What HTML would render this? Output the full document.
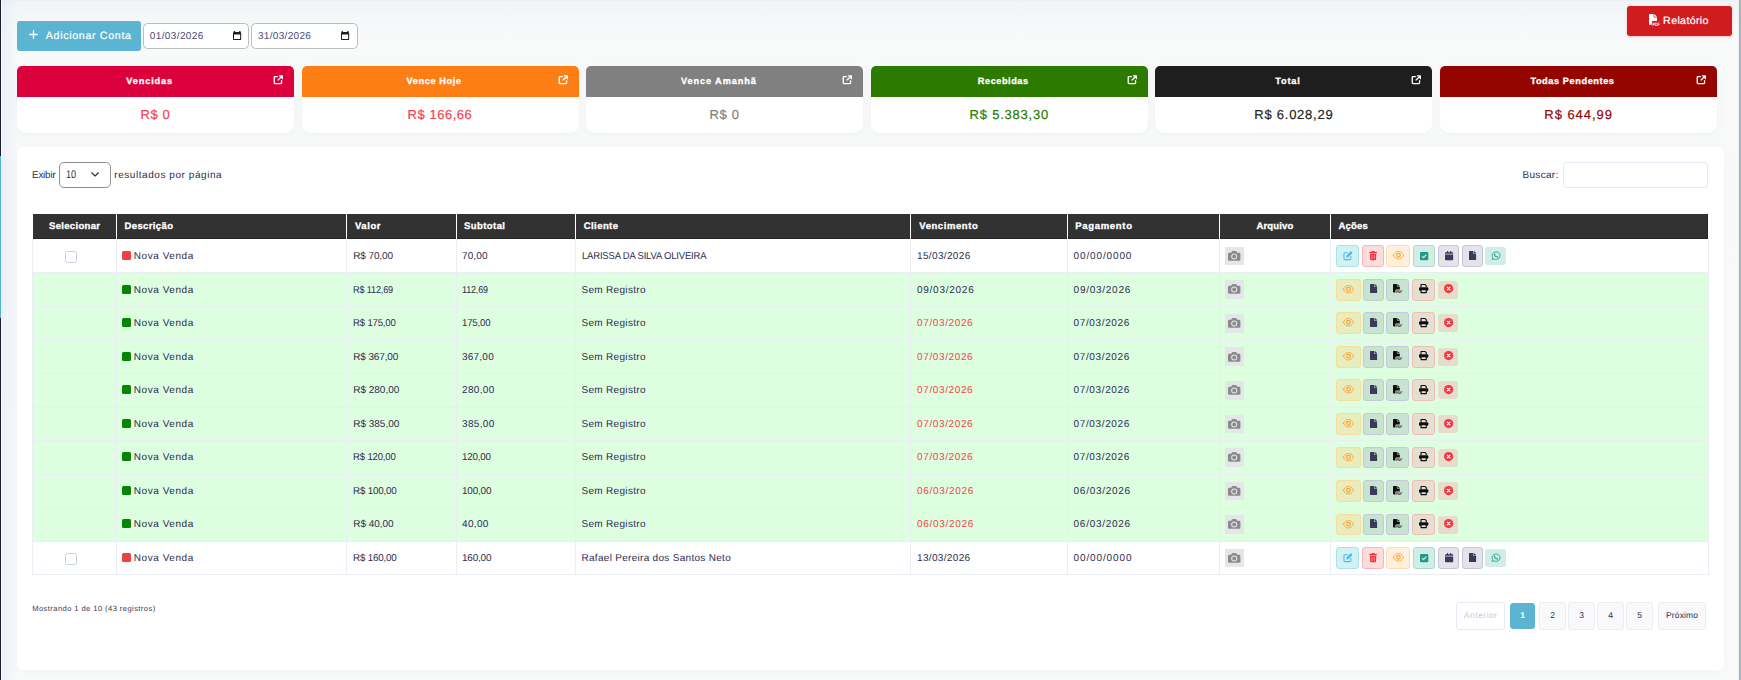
<!DOCTYPE html>
<html lang="pt-BR">
<head>
<meta charset="utf-8">
<title>Contas a Receber</title>
<style>
html,body{margin:0;padding:0;}
body{width:1741px;height:680px;position:relative;overflow:hidden;font-family:"Liberation Sans", sans-serif;text-rendering:geometricPrecision;
background:linear-gradient(180deg,#eceef3 0,#f1f4f8 2px,#f4f7f9 12px,#f8fafa 40px,#f9fbfb 100%);}
.t{position:absolute;white-space:pre;transform-origin:0 50%;}
.med{-webkit-text-stroke:0.2px currentColor;}
.bd{-webkit-text-stroke:0.3px currentColor;}
svg{display:block;overflow:visible}
</style>
</head>
<body>
<div class="app-edges">
<div style="position:absolute;left:0px;top:0px;width:1px;height:680px;background:#1b1c30;"></div>
<div style="position:absolute;left:0px;top:156px;width:1px;height:162px;background:#53b5d6;"></div>
<div style="position:absolute;left:1px;top:0px;width:1px;height:680px;background:#fbfbfe;"></div>
<div style="position:absolute;left:2px;top:0px;width:16px;height:680px;background:linear-gradient(90deg,rgba(226,234,244,.6),rgba(226,234,244,0));"></div>
<div style="position:absolute;left:1739px;top:0px;width:2px;height:680px;background:#aab2bd;"></div>
<div style="position:absolute;left:1738px;top:0px;width:1px;height:680px;background:#eceff3;"></div>
</div>
<header class="toolbar">
<div style="position:absolute;left:17px;top:21px;width:124px;height:30px;background:#5bb4d1;border-radius:3px;"></div>
<svg style="position:absolute;left:29px;top:29.6px" width="9" height="9" viewBox="0 0 18 18" preserveAspectRatio="none"><path stroke="#fff" stroke-width="2.700" d="M9 .500v17M.500 9h17"/></svg>
<span class="t med" style="left:45.80px;top:29.49px;font-size:10.7px;line-height:14px;color:#fff;letter-spacing:0.654px;">Adicionar Conta</span>
<div style="position:absolute;left:143px;top:23px;width:106px;height:26px;box-sizing:border-box;background:#fff;border:1px solid #bdbdbd;border-radius:4.5px;"></div>
<div style="position:absolute;left:251px;top:23px;width:107px;height:26px;box-sizing:border-box;background:#fff;border:1px solid #bdbdbd;border-radius:4.5px;"></div>
<span class="t " style="left:149.80px;top:30.24px;font-size:10px;line-height:13px;color:#4a4a6e;letter-spacing:0.382px;">01/03/2026</span>
<span class="t " style="left:257.90px;top:30.24px;font-size:10px;line-height:13px;color:#4a4a6e;letter-spacing:0.326px;">31/03/2026</span>
<svg style="position:absolute;left:232.9px;top:30.9px" width="8.2" height="9.1" viewBox="0 0 16 18" preserveAspectRatio="none"><path fill="#1c1c1c" fill-rule="evenodd" d="M1.600 0h1.800l.900 2.200h7.400l.900-2.200h1.800l.700 2.600A2.400 2.400 0 0 1 16 4.600V15.600a2.400 2.400 0 0 1-2.400 2.400H2.400A2.400 2.400 0 0 1 0 15.600V4.600A2.400 2.400 0 0 1 .900 2.600zM2 6.800V15.400a.600.600 0 0 0 .600.600h10.800a.600.600 0 0 0 .600-.600V6.800z"/></svg>
<svg style="position:absolute;left:341.0px;top:30.9px" width="8.2" height="9.1" viewBox="0 0 16 18" preserveAspectRatio="none"><path fill="#1c1c1c" fill-rule="evenodd" d="M1.600 0h1.800l.900 2.200h7.400l.900-2.200h1.800l.700 2.600A2.400 2.400 0 0 1 16 4.600V15.600a2.400 2.400 0 0 1-2.400 2.400H2.400A2.400 2.400 0 0 1 0 15.600V4.600A2.400 2.400 0 0 1 .900 2.600zM2 6.800V15.400a.600.600 0 0 0 .600.600h10.800a.600.600 0 0 0 .600-.600V6.800z"/></svg>
<div style="position:absolute;left:1627px;top:6.2px;width:105px;height:29.4px;background:#d01c1f;border-radius:3px;box-shadow:0 1px 3px rgba(208,28,31,.25);"></div>
<svg style="position:absolute;left:1649.2px;top:14.4px" width="10.9" height="11.7" viewBox="0 0 19 20" preserveAspectRatio="none"><path fill="#fff" d="M0 1.600A1.600 1.600 0 0 1 1.600 0H8v4.400A1.600 1.600 0 0 0 9.600 6H14v6H6.600A1.600 1.600 0 0 0 5 13.600V18.500H1.600A1.600 1.600 0 0 1 0 16.900zM14 4.800H9.600a.400.400 0 0 1-.400-.400V0z"/><text x="6" y="20" font-family="Liberation Sans, sans-serif" font-weight="700" font-size="8" textLength="13" lengthAdjust="spacingAndGlyphs" fill="#fff">PDF</text></svg>
<span class="t med" style="left:1663.10px;top:14.49px;font-size:10.7px;line-height:14px;color:#fff;letter-spacing:0.327px;">Relatório</span>
</header>
<section class="summary-cards">
<article class="card">
<div style="position:absolute;left:17.0px;top:66px;width:277.0px;height:66.6px;background:#fff;border-radius:5px 5px 9px 9px;box-shadow:0 3px 10px rgba(150,165,190,.09);overflow:hidden;"><div style="height:30.6px;background:#dc003c"></div></div>
<svg style="position:absolute;left:273.0px;top:74.6px" width="10.4" height="9.672" viewBox="0 0 20 20" preserveAspectRatio="none"><g fill="none" stroke="#fff" stroke-width="2.600" stroke-linecap="round" stroke-linejoin="round"><path d="M8.300 3.400H3.900A1.500 1.500 0 0 0 2.400 4.900V16.100A1.500 1.500 0 0 0 3.900 17.600H15A1.500 1.500 0 0 0 16.500 16.100V11.800"/><path d="M12.400 2h5.600v5.600M17.600 2.400 9.800 10.200"/></g></svg>
<span class="t bd" style="left:126.20px;top:75.01px;font-size:9.2px;line-height:12px;color:#fff;font-weight:700;letter-spacing:0.879px;">Vencidas</span>
<span class="t med" style="left:140.47px;top:106.20px;font-size:13px;line-height:17px;color:#f23e4e;letter-spacing:0.594px;">R$ 0</span>
</article>
<article class="card">
<div style="position:absolute;left:301.6px;top:66px;width:277.0px;height:66.6px;background:#fff;border-radius:5px 5px 9px 9px;box-shadow:0 3px 10px rgba(150,165,190,.09);overflow:hidden;"><div style="height:30.6px;background:#fd7e14"></div></div>
<svg style="position:absolute;left:557.6px;top:74.6px" width="10.4" height="9.672" viewBox="0 0 20 20" preserveAspectRatio="none"><g fill="none" stroke="#fff" stroke-width="2.600" stroke-linecap="round" stroke-linejoin="round"><path d="M8.300 3.400H3.900A1.500 1.500 0 0 0 2.400 4.900V16.100A1.500 1.500 0 0 0 3.900 17.600H15A1.500 1.500 0 0 0 16.500 16.100V11.800"/><path d="M12.400 2h5.600v5.600M17.600 2.400 9.800 10.200"/></g></svg>
<span class="t bd" style="left:406.55px;top:75.01px;font-size:9.2px;line-height:12px;color:#fff;font-weight:700;letter-spacing:0.608px;">Vence Hoje</span>
<span class="t med" style="left:407.58px;top:106.20px;font-size:13px;line-height:17px;color:#f23e4e;letter-spacing:0.531px;">R$ 166,66</span>
</article>
<article class="card">
<div style="position:absolute;left:586.2px;top:66px;width:277.0px;height:66.6px;background:#fff;border-radius:5px 5px 9px 9px;box-shadow:0 3px 10px rgba(150,165,190,.09);overflow:hidden;"><div style="height:30.6px;background:#808080"></div></div>
<svg style="position:absolute;left:842.2px;top:74.6px" width="10.4" height="9.672" viewBox="0 0 20 20" preserveAspectRatio="none"><g fill="none" stroke="#fff" stroke-width="2.600" stroke-linecap="round" stroke-linejoin="round"><path d="M8.300 3.400H3.900A1.500 1.500 0 0 0 2.400 4.900V16.100A1.500 1.500 0 0 0 3.900 17.600H15A1.500 1.500 0 0 0 16.500 16.100V11.800"/><path d="M12.400 2h5.600v5.600M17.600 2.400 9.800 10.200"/></g></svg>
<span class="t bd" style="left:680.90px;top:75.01px;font-size:9.2px;line-height:12px;color:#fff;font-weight:700;letter-spacing:0.906px;">Vence Amanhã</span>
<span class="t med" style="left:709.55px;top:106.20px;font-size:13px;line-height:17px;color:#808080;letter-spacing:0.677px;">R$ 0</span>
</article>
<article class="card">
<div style="position:absolute;left:870.8px;top:66px;width:277.0px;height:66.6px;background:#fff;border-radius:5px 5px 9px 9px;box-shadow:0 3px 10px rgba(150,165,190,.09);overflow:hidden;"><div style="height:30.6px;background:#2d7a00"></div></div>
<svg style="position:absolute;left:1126.8px;top:74.6px" width="10.4" height="9.672" viewBox="0 0 20 20" preserveAspectRatio="none"><g fill="none" stroke="#fff" stroke-width="2.600" stroke-linecap="round" stroke-linejoin="round"><path d="M8.300 3.400H3.900A1.500 1.500 0 0 0 2.400 4.900V16.100A1.500 1.500 0 0 0 3.900 17.600H15A1.500 1.500 0 0 0 16.500 16.100V11.800"/><path d="M12.400 2h5.600v5.600M17.600 2.400 9.800 10.200"/></g></svg>
<span class="t bd" style="left:977.85px;top:75.01px;font-size:9.2px;line-height:12px;color:#fff;font-weight:700;letter-spacing:0.541px;">Recebidas</span>
<span class="t med" style="left:969.60px;top:106.20px;font-size:13px;line-height:17px;color:#2d7a00;letter-spacing:0.776px;">R$ 5.383,30</span>
</article>
<article class="card">
<div style="position:absolute;left:1155.4px;top:66px;width:277.0px;height:66.6px;background:#fff;border-radius:5px 5px 9px 9px;box-shadow:0 3px 10px rgba(150,165,190,.09);overflow:hidden;"><div style="height:30.6px;background:#1e1e1e"></div></div>
<svg style="position:absolute;left:1411.4px;top:74.6px" width="10.4" height="9.672" viewBox="0 0 20 20" preserveAspectRatio="none"><g fill="none" stroke="#fff" stroke-width="2.600" stroke-linecap="round" stroke-linejoin="round"><path d="M8.300 3.400H3.900A1.500 1.500 0 0 0 2.400 4.900V16.100A1.500 1.500 0 0 0 3.900 17.600H15A1.500 1.500 0 0 0 16.500 16.100V11.800"/><path d="M12.400 2h5.600v5.600M17.600 2.400 9.800 10.200"/></g></svg>
<span class="t bd" style="left:1275.35px;top:75.01px;font-size:9.2px;line-height:12px;color:#fff;font-weight:700;letter-spacing:0.809px;">Total</span>
<span class="t med" style="left:1254.35px;top:106.20px;font-size:13px;line-height:17px;color:#1e1e1e;letter-spacing:0.746px;">R$ 6.028,29</span>
</article>
<article class="card">
<div style="position:absolute;left:1440.0px;top:66px;width:277.0px;height:66.6px;background:#fff;border-radius:5px 5px 9px 9px;box-shadow:0 3px 10px rgba(150,165,190,.09);overflow:hidden;"><div style="height:30.6px;background:#940500"></div></div>
<svg style="position:absolute;left:1696.0px;top:74.6px" width="10.4" height="9.672" viewBox="0 0 20 20" preserveAspectRatio="none"><g fill="none" stroke="#fff" stroke-width="2.600" stroke-linecap="round" stroke-linejoin="round"><path d="M8.300 3.400H3.900A1.500 1.500 0 0 0 2.400 4.900V16.100A1.500 1.500 0 0 0 3.900 17.600H15A1.500 1.500 0 0 0 16.500 16.100V11.800"/><path d="M12.400 2h5.600v5.600M17.600 2.400 9.800 10.200"/></g></svg>
<span class="t bd" style="left:1530.40px;top:75.01px;font-size:9.2px;line-height:12px;color:#fff;font-weight:700;letter-spacing:0.586px;">Todas Pendentes</span>
<span class="t med" style="left:1544.30px;top:106.20px;font-size:13px;line-height:17px;color:#940500;letter-spacing:0.95px;">R$ 644,99</span>
</article>
</section>
<main class="panel">
<div class="table-controls">
<div style="position:absolute;left:17px;top:147.2px;width:1707.4px;height:522.6px;background:#fff;border-radius:5px;box-shadow:0 3px 12px rgba(150,165,190,.08);"></div>
<span class="t " style="left:32.10px;top:169.23px;font-size:10px;line-height:13px;color:#2b2d4f;letter-spacing:-0.18px;transform:scaleX(0.9828);">Exibir</span>
<div style="position:absolute;left:59.3px;top:162.1px;width:51.5px;height:25.5px;box-sizing:border-box;background:#fff;border:1px solid #8f8f8f;border-radius:5px;"></div>
<span class="t " style="left:66.30px;top:167.89px;font-size:11px;line-height:15px;color:#2b2d4f;letter-spacing:-0.18px;transform:scaleX(0.8285);">10</span>
<svg style="position:absolute;left:91.1px;top:172.2px" width="8.2" height="5" viewBox="0 0 16 10" preserveAspectRatio="none"><path fill="none" stroke="#333" stroke-width="2.200" stroke-linecap="round" stroke-linejoin="round" d="M1.500 1.500 8 8l6.500-6.500"/></svg>
<span class="t " style="left:114.30px;top:169.23px;font-size:10px;line-height:13px;color:#2b2d4f;letter-spacing:0.556px;">resultados por página</span>
<span class="t " style="left:1522.50px;top:169.23px;font-size:10px;line-height:13px;color:#2b2d4f;letter-spacing:0.299px;">Buscar:</span>
<div style="position:absolute;left:1563.3px;top:162.2px;width:145.2px;height:25.4px;box-sizing:border-box;background:#fff;border:1px solid #e6e8f3;border-radius:3px;"></div>
</div>
<div class="table">
<div class="thead">
<div style="position:absolute;left:33px;top:214px;width:1675px;height:25px;background:#323232;box-sizing:border-box;border-bottom:1px solid #262626;border-right:1px solid #262626;"></div>
<div style="position:absolute;left:116px;top:214px;width:1px;height:25px;background:#fff;"></div>
<div style="position:absolute;left:346px;top:214px;width:1px;height:25px;background:#fff;"></div>
<div style="position:absolute;left:456px;top:214px;width:1px;height:25px;background:#fff;"></div>
<div style="position:absolute;left:575px;top:214px;width:1px;height:25px;background:#fff;"></div>
<div style="position:absolute;left:910px;top:214px;width:1px;height:25px;background:#fff;"></div>
<div style="position:absolute;left:1067px;top:214px;width:1px;height:25px;background:#fff;"></div>
<div style="position:absolute;left:1219px;top:214px;width:1px;height:25px;background:#fff;"></div>
<div style="position:absolute;left:1330px;top:214px;width:1px;height:25px;background:#fff;"></div>
<span class="t bd" style="left:49.00px;top:220.41px;font-size:9.5px;line-height:13px;color:#fff;font-weight:700;letter-spacing:0.326px;">Selecionar</span>
<span class="t bd" style="left:124.50px;top:220.41px;font-size:9.5px;line-height:13px;color:#fff;font-weight:700;letter-spacing:0.385px;">Descrição</span>
<span class="t bd" style="left:355.00px;top:220.41px;font-size:9.5px;line-height:13px;color:#fff;font-weight:700;letter-spacing:0.562px;">Valor</span>
<span class="t bd" style="left:464.00px;top:220.41px;font-size:9.5px;line-height:13px;color:#fff;font-weight:700;letter-spacing:0.429px;">Subtotal</span>
<span class="t bd" style="left:583.75px;top:220.41px;font-size:9.5px;line-height:13px;color:#fff;font-weight:700;letter-spacing:0.427px;">Cliente</span>
<span class="t bd" style="left:919.25px;top:220.41px;font-size:9.5px;line-height:13px;color:#fff;font-weight:700;letter-spacing:0.575px;">Vencimento</span>
<span class="t bd" style="left:1075.25px;top:220.41px;font-size:9.5px;line-height:13px;color:#fff;font-weight:700;letter-spacing:0.691px;">Pagamento</span>
<span class="t bd" style="left:1256.53px;top:220.41px;font-size:9.5px;line-height:13px;color:#fff;font-weight:700;letter-spacing:0.143px;">Arquivo</span>
<span class="t bd" style="left:1338.50px;top:220.41px;font-size:9.5px;line-height:13px;color:#fff;font-weight:700;letter-spacing:0.196px;">Ações</span>
</div>
<div class="tbody">
<div style="position:absolute;left:33px;top:273px;width:1675px;height:33px;background:#defee0;"></div>
<div style="position:absolute;left:33px;top:307px;width:1675px;height:33px;background:#defee0;"></div>
<div style="position:absolute;left:33px;top:341px;width:1675px;height:32px;background:#defee0;"></div>
<div style="position:absolute;left:33px;top:374px;width:1675px;height:33px;background:#defee0;"></div>
<div style="position:absolute;left:33px;top:408px;width:1675px;height:32px;background:#defee0;"></div>
<div style="position:absolute;left:33px;top:441px;width:1675px;height:33px;background:#defee0;"></div>
<div style="position:absolute;left:33px;top:475px;width:1675px;height:32px;background:#defee0;"></div>
<div style="position:absolute;left:33px;top:508px;width:1675px;height:33px;background:#defee0;"></div>
<div style="position:absolute;left:32px;top:272px;width:1677px;height:1px;background:#ebedf5;"></div>
<div style="position:absolute;left:32px;top:306px;width:1677px;height:1px;background:#ebedf5;"></div>
<div style="position:absolute;left:32px;top:340px;width:1677px;height:1px;background:#ebedf5;"></div>
<div style="position:absolute;left:32px;top:373px;width:1677px;height:1px;background:#ebedf5;"></div>
<div style="position:absolute;left:32px;top:407px;width:1677px;height:1px;background:#ebedf5;"></div>
<div style="position:absolute;left:32px;top:440px;width:1677px;height:1px;background:#ebedf5;"></div>
<div style="position:absolute;left:32px;top:474px;width:1677px;height:1px;background:#ebedf5;"></div>
<div style="position:absolute;left:32px;top:507px;width:1677px;height:1px;background:#ebedf5;"></div>
<div style="position:absolute;left:32px;top:541px;width:1677px;height:1px;background:#ebedf5;"></div>
<div style="position:absolute;left:32px;top:574px;width:1677px;height:1px;background:#ebedf5;"></div>
<div class="tr">
<div style="position:absolute;left:65.2px;top:251.32px;width:11.6px;height:11.5px;box-sizing:border-box;background:#fff;border:1px solid #c5cee2;border-radius:2.500px;"></div>
<div style="position:absolute;left:122px;top:250.9px;width:9px;height:8.8px;background:#f04141;border-radius:1.500px;"></div>
<span class="t " style="left:133.75px;top:250.23px;font-size:10px;line-height:13px;color:#2b2d4f;letter-spacing:0.556px;">Nova Venda</span>
<span class="t " style="left:353.25px;top:250.23px;font-size:10px;line-height:13px;color:#2b2d4f;letter-spacing:-0.121px;">R$ 70,00</span>
<span class="t " style="left:462.00px;top:250.23px;font-size:10px;line-height:13px;color:#2b2d4f;letter-spacing:0.117px;">70,00</span>
<span class="t " style="left:581.50px;top:250.23px;font-size:10px;line-height:13px;color:#2b2d4f;letter-spacing:-0.18px;transform:scaleX(0.9468);">LARISSA DA SILVA OLIVEIRA</span>
<span class="t " style="left:917.00px;top:250.23px;font-size:10px;line-height:13px;color:#2b2d4f;letter-spacing:0.354px;">15/03/2026</span>
<span class="t " style="left:1073.60px;top:250.23px;font-size:10px;line-height:13px;color:#2b2d4f;letter-spacing:0.86px;">00/00/0000</span>
<div style="position:absolute;left:1225.2px;top:246.72px;width:19px;height:18.7px;background:#e4e7e8;"></div>
<svg style="position:absolute;left:1228.4px;top:250.82px" width="12.4" height="9.7" viewBox="0 0 24 19" preserveAspectRatio="none"><path fill="#8a8a8a" d="M2.5 3.5H6L7.6.9A1.8 1.8 0 0 1 9.2 0h5.6a1.8 1.8 0 0 1 1.6.9L18 3.5h3.5A2.5 2.5 0 0 1 24 6v10.5a2.5 2.5 0 0 1-2.5 2.5h-19A2.5 2.5 0 0 1 0 16.500V6a2.500 2.500 0 0 1 2.500-2.500z"/><circle cx="12" cy="10.800" r="5.900" fill="#e4e7e8"/><circle cx="12" cy="10.800" r="3.800" fill="#8a8a8a"/></svg>
<div style="position:absolute;left:1336px;top:245px;width:23px;height:22px;box-sizing:border-box;background:#d1f1f3;border:1px solid #a9e4e8;border-radius:3px;"></div>
<svg style="position:absolute;left:1343.4px;top:250.72px" width="9.6" height="9.6" viewBox="0 0 20 20" preserveAspectRatio="none"><path fill="none" stroke="#4fb8ee" stroke-width="2.2" stroke-linecap="round" stroke-linejoin="round" d="M9 3.600H4.200A2.200 2.200 0 0 0 2 5.800v10A2.200 2.200 0 0 0 4.200 18h10a2.200 2.200 0 0 0 2.200-2.200V11"/><path fill="#4fb8ee" d="M15.200.900a1.500 1.500 0 0 1 2.100 0l1.800 1.800a1.500 1.500 0 0 1 0 2.100L11 12.900l-4.300 1 .900-4.300z"/></svg>
<div style="position:absolute;left:1362px;top:245px;width:22px;height:22px;box-sizing:border-box;background:#fddcdd;border:1px solid #f9b5b8;border-radius:3px;"></div>
<svg style="position:absolute;left:1369px;top:250.72px" width="8.2" height="9.2" viewBox="0 0 18 20" preserveAspectRatio="none"><path fill="#f0353f" d="M6.300.700A1.300 1.300 0 0 1 7.500 0h3a1.300 1.300 0 0 1 1.200.700l.500.900H16.500a1.200 1.200 0 0 1 0 2.500h-15a1.200 1.200 0 0 1 0-2.500H5.800zM1.800 5.600h14.400l-.800 12.500A2 2 0 0 1 13.400 20H4.600a2 2 0 0 1-2-1.900z"/><path stroke="#f9a9a0" stroke-width="1.700" d="M6.500 8v9.400M11.500 8v9.400"/></svg>
<div style="position:absolute;left:1386px;top:245px;width:24px;height:22px;box-sizing:border-box;background:#fff0dd;border:1px solid #ffdcb4;border-radius:3px;"></div>
<svg style="position:absolute;left:1392.9px;top:251.12px" width="10.9" height="8.5" viewBox="0 3 24 18" preserveAspectRatio="none"><g fill="none" stroke="#ffa033" stroke-linecap="round" stroke-linejoin="round"><path stroke-width="1.900" d="M1 12C3.800 6 7.800 4 12 4s8.200 2 11 8c-2.800 6-6.800 8-11 8s-8.200-2-11-8z"/><circle cx="12" cy="12" r="3.900" stroke-width="2.600"/></g></svg>
<div style="position:absolute;left:1413px;top:245px;width:22px;height:22px;box-sizing:border-box;background:#d2ece6;border:1px solid #a9dccf;border-radius:3px;"></div>
<svg style="position:absolute;left:1420px;top:251.82px" width="8.3" height="8.3" viewBox="0 0 20 20" preserveAspectRatio="none"><rect width="20" height="20" rx="3.200" fill="#1a9c86"/><path fill="none" stroke="#d6f3ee" stroke-width="2.600" stroke-linecap="round" stroke-linejoin="round" d="M5.500 10.600 8.600 13.600 14.600 7"/></svg>
<div style="position:absolute;left:1438px;top:245px;width:21px;height:22px;box-sizing:border-box;background:#e4e3ea;border:1px solid #c8c4de;border-radius:3px;"></div>
<svg style="position:absolute;left:1444.9px;top:250.72px" width="8.2" height="9.2" viewBox="0 0 18 20" preserveAspectRatio="none"><path fill="#3b3a5b" d="M0 7.500h18V18a2 2 0 0 1-2 2H2a2 2 0 0 1-2-2zM2 2.500h2.200V.800a.800.800 0 0 1 .800-.800h1.200a.800.800 0 0 1 .800.800V2.500h4V.800a.800.800 0 0 1 .800-.800H13a.800.800 0 0 1 .800.800V2.500H16a2 2 0 0 1 2 2V6H0V4.500a2 2 0 0 1 2-2z"/></svg>
<div style="position:absolute;left:1462px;top:245px;width:21px;height:22px;box-sizing:border-box;background:#e4e3ea;border:1px solid #c8c4de;border-radius:3px;"></div>
<svg style="position:absolute;left:1468.9px;top:250.72px" width="7.1" height="9.1" viewBox="0 0 15 20" preserveAspectRatio="none"><path fill="#3b3a5b" d="M8.800 5.300V0H1A1 1 0 0 0 0 1v18a1 1 0 0 0 1 1h13a1 1 0 0 0 1-1V6.300H9.800a1 1 0 0 1-1-1zM15 4.800v.200h-5V0h.200a1 1 0 0 1 .700.300l3.800 3.800a1 1 0 0 1 .300.700z"/></svg>
<div style="position:absolute;left:1485px;top:247px;width:21px;height:18px;box-sizing:border-box;background:#d2ece6;border-radius:3px;"></div>
<svg style="position:absolute;left:1491px;top:250.72px" width="10" height="9.3" viewBox="0 0 24 24" preserveAspectRatio="none"><path fill="none" stroke="#1a9c86" stroke-width="2" stroke-linejoin="round" d="M12.200 2.200a9.700 9.700 0 0 0-8.300 14.700L2.400 21.700l4.900-1.400A9.700 9.700 0 1 0 12.200 2.200z"/><path fill="#1a9c86" d="M8.600 6.800c.400-.300.900-.200 1.100.200l.900 2c.100.300.100.600-.100.800l-.700.900c.800 1.500 1.900 2.600 3.500 3.400l.900-.800c.200-.200.600-.300.900-.100l1.900 1c.400.200.500.600.300 1-.500 1.200-1.700 1.900-3 1.600-3.900-.900-6.800-3.900-7.500-7.600-.200-1 .600-1.900 1.800-2.400z"/></svg>
</div>
<div class="tr paid">
<div style="position:absolute;left:122px;top:284.9px;width:9px;height:8.8px;background:#078307;border-radius:1.500px;"></div>
<span class="t " style="left:133.75px;top:284.24px;font-size:10px;line-height:13px;color:#2b2d4f;letter-spacing:0.556px;">Nova Venda</span>
<span class="t " style="left:353.25px;top:284.24px;font-size:10px;line-height:13px;color:#2b2d4f;letter-spacing:-0.18px;transform:scaleX(0.9143);">R$ 112,69</span>
<span class="t " style="left:462.00px;top:284.24px;font-size:10px;line-height:13px;color:#2b2d4f;letter-spacing:-0.18px;transform:scaleX(0.8983);">112,69</span>
<span class="t " style="left:581.50px;top:284.24px;font-size:10px;line-height:13px;color:#2b2d4f;letter-spacing:0.311px;">Sem Registro</span>
<span class="t " style="left:917.00px;top:284.24px;font-size:10px;line-height:13px;color:#2b2d4f;letter-spacing:0.738px;">09/03/2026</span>
<span class="t " style="left:1073.60px;top:284.24px;font-size:10px;line-height:13px;color:#2b2d4f;letter-spacing:0.738px;">09/03/2026</span>
<div style="position:absolute;left:1225.2px;top:280.28px;width:19px;height:18.7px;background:#e3e7e7;"></div>
<svg style="position:absolute;left:1228.4px;top:284.38px" width="12.4" height="9.7" viewBox="0 0 24 19" preserveAspectRatio="none"><path fill="#8a8a8a" d="M2.5 3.5H6L7.6.9A1.8 1.8 0 0 1 9.2 0h5.6a1.8 1.8 0 0 1 1.6.9L18 3.5h3.5A2.5 2.5 0 0 1 24 6v10.5a2.5 2.5 0 0 1-2.5 2.5h-19A2.5 2.5 0 0 1 0 16.500V6a2.500 2.500 0 0 1 2.500-2.500z"/><circle cx="12" cy="10.800" r="5.900" fill="#e3e7e7"/><circle cx="12" cy="10.800" r="3.800" fill="#8a8a8a"/></svg>
<div style="position:absolute;left:1336px;top:279px;width:25px;height:22px;box-sizing:border-box;background:#e9edbe;border:1px solid #f5dc9f;border-radius:3px;"></div>
<svg style="position:absolute;left:1343.0px;top:284.67999999999995px" width="10.9" height="8.5" viewBox="0 3 24 18" preserveAspectRatio="none"><g fill="none" stroke="#ffa033" stroke-linecap="round" stroke-linejoin="round"><path stroke-width="1.900" d="M1 12C3.800 6 7.800 4 12 4s8.200 2 11 8c-2.800 6-6.800 8-11 8s-8.200-2-11-8z"/><circle cx="12" cy="12" r="3.900" stroke-width="2.600"/></g></svg>
<div style="position:absolute;left:1363px;top:279px;width:21px;height:22px;box-sizing:border-box;background:#c8e3cf;border:1px solid #c6c6dc;border-radius:3px;"></div>
<svg style="position:absolute;left:1370.2px;top:284.28px" width="7.1" height="9.1" viewBox="0 0 15 20" preserveAspectRatio="none"><path fill="#3b3a5b" d="M8.800 5.300V0H1A1 1 0 0 0 0 1v18a1 1 0 0 0 1 1h13a1 1 0 0 0 1-1V6.300H9.800a1 1 0 0 1-1-1zM15 4.800v.200h-5V0h.200a1 1 0 0 1 .700.300l3.800 3.800a1 1 0 0 1 .300.700z"/></svg>
<div style="position:absolute;left:1386.2px;top:279px;width:22.6px;height:22px;box-sizing:border-box;background:#c8e3cf;border:1px solid #c6c6dc;border-radius:3px;"></div>
<svg style="position:absolute;left:1393.2px;top:284.28px" width="9.2" height="9.2" viewBox="0 0 19 20" preserveAspectRatio="none"><path fill="#0d0d12" d="M0 1.600A1.600 1.600 0 0 1 1.600 0H8v4.400A1.600 1.600 0 0 0 9.600 6H14v6H6.600A1.600 1.600 0 0 0 5 13.600V18.500H1.600A1.600 1.600 0 0 1 0 16.900zM14 4.800H9.600a.400.400 0 0 1-.400-.400V0z"/><text x="6" y="20" font-family="Liberation Sans, sans-serif" font-weight="700" font-size="8" textLength="13" lengthAdjust="spacingAndGlyphs" fill="#0d0d12">PDF</text></svg>
<div style="position:absolute;left:1412.1px;top:279px;width:22.7px;height:22px;box-sizing:border-box;background:#e6dfcf;border:1px solid #f0bcb8;border-radius:3px;"></div>
<svg style="position:absolute;left:1418.9px;top:284.28px" width="9.3" height="9.2" viewBox="0 0 20 20" preserveAspectRatio="none"><path fill="none" stroke="#0d0d12" stroke-width="2.400" stroke-linejoin="round" d="M4.400 7V1.200h8.800l2.400 2.400V7"/><rect x="0" y="7" width="20" height="7.600" rx="2.200" fill="#0d0d12"/><rect x="4.400" y="12.200" width="11.200" height="6.600" fill="#e6dfcf" stroke="#0d0d12" stroke-width="2.400" stroke-linejoin="round"/></svg>
<div style="position:absolute;left:1438.2px;top:280.5px;width:19.7px;height:18.5px;box-sizing:border-box;background:#e5dccb;border-radius:3px;"></div>
<svg style="position:absolute;left:1443.7px;top:284.28px" width="9.2" height="9.2" viewBox="0 0 20 20" preserveAspectRatio="none"><circle cx="10" cy="10" r="10" fill="#f03a44"/><path stroke="#fff" stroke-width="2.300" stroke-linecap="round" d="M7 7l6 6M13 7l-6 6"/></svg>
</div>
<div class="tr paid">
<div style="position:absolute;left:122px;top:317.9px;width:9px;height:8.8px;background:#078307;border-radius:1.500px;"></div>
<span class="t " style="left:133.75px;top:317.24px;font-size:10px;line-height:13px;color:#2b2d4f;letter-spacing:0.556px;">Nova Venda</span>
<span class="t " style="left:353.25px;top:317.24px;font-size:10px;line-height:13px;color:#2b2d4f;letter-spacing:-0.18px;transform:scaleX(0.9571);">R$ 175,00</span>
<span class="t " style="left:462.00px;top:317.24px;font-size:10px;line-height:13px;color:#2b2d4f;letter-spacing:-0.18px;transform:scaleX(0.9632);">175,00</span>
<span class="t " style="left:581.50px;top:317.24px;font-size:10px;line-height:13px;color:#2b2d4f;letter-spacing:0.311px;">Sem Registro</span>
<span class="t " style="left:917.00px;top:317.24px;font-size:10px;line-height:13px;color:#f04545;letter-spacing:0.626px;">07/03/2026</span>
<span class="t " style="left:1073.60px;top:317.24px;font-size:10px;line-height:13px;color:#2b2d4f;letter-spacing:0.626px;">07/03/2026</span>
<div style="position:absolute;left:1225.2px;top:313.85px;width:19px;height:18.7px;background:#e3e7e7;"></div>
<svg style="position:absolute;left:1228.4px;top:317.95px" width="12.4" height="9.7" viewBox="0 0 24 19" preserveAspectRatio="none"><path fill="#8a8a8a" d="M2.5 3.5H6L7.6.9A1.8 1.8 0 0 1 9.2 0h5.6a1.8 1.8 0 0 1 1.6.9L18 3.5h3.5A2.5 2.5 0 0 1 24 6v10.5a2.5 2.5 0 0 1-2.5 2.5h-19A2.5 2.5 0 0 1 0 16.500V6a2.500 2.500 0 0 1 2.500-2.500z"/><circle cx="12" cy="10.800" r="5.900" fill="#e3e7e7"/><circle cx="12" cy="10.800" r="3.800" fill="#8a8a8a"/></svg>
<div style="position:absolute;left:1336px;top:312px;width:25px;height:22px;box-sizing:border-box;background:#e9edbe;border:1px solid #f5dc9f;border-radius:3px;"></div>
<svg style="position:absolute;left:1343.0px;top:318.25px" width="10.9" height="8.5" viewBox="0 3 24 18" preserveAspectRatio="none"><g fill="none" stroke="#ffa033" stroke-linecap="round" stroke-linejoin="round"><path stroke-width="1.900" d="M1 12C3.800 6 7.800 4 12 4s8.200 2 11 8c-2.800 6-6.800 8-11 8s-8.200-2-11-8z"/><circle cx="12" cy="12" r="3.900" stroke-width="2.600"/></g></svg>
<div style="position:absolute;left:1363px;top:312px;width:21px;height:22px;box-sizing:border-box;background:#c8e3cf;border:1px solid #c6c6dc;border-radius:3px;"></div>
<svg style="position:absolute;left:1370.2px;top:317.85px" width="7.1" height="9.1" viewBox="0 0 15 20" preserveAspectRatio="none"><path fill="#3b3a5b" d="M8.800 5.300V0H1A1 1 0 0 0 0 1v18a1 1 0 0 0 1 1h13a1 1 0 0 0 1-1V6.300H9.800a1 1 0 0 1-1-1zM15 4.800v.200h-5V0h.200a1 1 0 0 1 .700.300l3.800 3.800a1 1 0 0 1 .300.700z"/></svg>
<div style="position:absolute;left:1386.2px;top:312px;width:22.6px;height:22px;box-sizing:border-box;background:#c8e3cf;border:1px solid #c6c6dc;border-radius:3px;"></div>
<svg style="position:absolute;left:1393.2px;top:317.85px" width="9.2" height="9.2" viewBox="0 0 19 20" preserveAspectRatio="none"><path fill="#0d0d12" d="M0 1.600A1.600 1.600 0 0 1 1.600 0H8v4.400A1.600 1.600 0 0 0 9.600 6H14v6H6.600A1.600 1.600 0 0 0 5 13.600V18.500H1.600A1.600 1.600 0 0 1 0 16.900zM14 4.800H9.600a.400.400 0 0 1-.400-.400V0z"/><text x="6" y="20" font-family="Liberation Sans, sans-serif" font-weight="700" font-size="8" textLength="13" lengthAdjust="spacingAndGlyphs" fill="#0d0d12">PDF</text></svg>
<div style="position:absolute;left:1412.1px;top:312px;width:22.7px;height:22px;box-sizing:border-box;background:#e6dfcf;border:1px solid #f0bcb8;border-radius:3px;"></div>
<svg style="position:absolute;left:1418.9px;top:317.85px" width="9.3" height="9.2" viewBox="0 0 20 20" preserveAspectRatio="none"><path fill="none" stroke="#0d0d12" stroke-width="2.400" stroke-linejoin="round" d="M4.400 7V1.200h8.800l2.400 2.400V7"/><rect x="0" y="7" width="20" height="7.600" rx="2.200" fill="#0d0d12"/><rect x="4.400" y="12.200" width="11.200" height="6.600" fill="#e6dfcf" stroke="#0d0d12" stroke-width="2.400" stroke-linejoin="round"/></svg>
<div style="position:absolute;left:1438.2px;top:313.5px;width:19.7px;height:18.5px;box-sizing:border-box;background:#e5dccb;border-radius:3px;"></div>
<svg style="position:absolute;left:1443.7px;top:317.85px" width="9.2" height="9.2" viewBox="0 0 20 20" preserveAspectRatio="none"><circle cx="10" cy="10" r="10" fill="#f03a44"/><path stroke="#fff" stroke-width="2.300" stroke-linecap="round" d="M7 7l6 6M13 7l-6 6"/></svg>
</div>
<div class="tr paid">
<div style="position:absolute;left:122px;top:351.9px;width:9px;height:8.8px;background:#078307;border-radius:1.500px;"></div>
<span class="t " style="left:133.75px;top:351.24px;font-size:10px;line-height:13px;color:#2b2d4f;letter-spacing:0.556px;">Nova Venda</span>
<span class="t " style="left:353.25px;top:351.24px;font-size:10px;line-height:13px;color:#2b2d4f;letter-spacing:-0.145px;">R$ 367,00</span>
<span class="t " style="left:462.00px;top:351.24px;font-size:10px;line-height:13px;color:#2b2d4f;letter-spacing:0.221px;">367,00</span>
<span class="t " style="left:581.50px;top:351.24px;font-size:10px;line-height:13px;color:#2b2d4f;letter-spacing:0.311px;">Sem Registro</span>
<span class="t " style="left:917.00px;top:351.24px;font-size:10px;line-height:13px;color:#f04545;letter-spacing:0.626px;">07/03/2026</span>
<span class="t " style="left:1073.60px;top:351.24px;font-size:10px;line-height:13px;color:#2b2d4f;letter-spacing:0.626px;">07/03/2026</span>
<div style="position:absolute;left:1225.2px;top:347.41px;width:19px;height:18.7px;background:#e3e7e7;"></div>
<svg style="position:absolute;left:1228.4px;top:351.51px" width="12.4" height="9.7" viewBox="0 0 24 19" preserveAspectRatio="none"><path fill="#8a8a8a" d="M2.5 3.5H6L7.6.9A1.8 1.8 0 0 1 9.2 0h5.6a1.8 1.8 0 0 1 1.6.9L18 3.5h3.5A2.5 2.5 0 0 1 24 6v10.5a2.5 2.5 0 0 1-2.5 2.5h-19A2.5 2.5 0 0 1 0 16.500V6a2.500 2.500 0 0 1 2.500-2.500z"/><circle cx="12" cy="10.800" r="5.900" fill="#e3e7e7"/><circle cx="12" cy="10.800" r="3.800" fill="#8a8a8a"/></svg>
<div style="position:absolute;left:1336px;top:346px;width:25px;height:22px;box-sizing:border-box;background:#e9edbe;border:1px solid #f5dc9f;border-radius:3px;"></div>
<svg style="position:absolute;left:1343.0px;top:351.81px" width="10.9" height="8.5" viewBox="0 3 24 18" preserveAspectRatio="none"><g fill="none" stroke="#ffa033" stroke-linecap="round" stroke-linejoin="round"><path stroke-width="1.900" d="M1 12C3.800 6 7.800 4 12 4s8.200 2 11 8c-2.800 6-6.800 8-11 8s-8.200-2-11-8z"/><circle cx="12" cy="12" r="3.900" stroke-width="2.600"/></g></svg>
<div style="position:absolute;left:1363px;top:346px;width:21px;height:22px;box-sizing:border-box;background:#c8e3cf;border:1px solid #c6c6dc;border-radius:3px;"></div>
<svg style="position:absolute;left:1370.2px;top:351.41px" width="7.1" height="9.1" viewBox="0 0 15 20" preserveAspectRatio="none"><path fill="#3b3a5b" d="M8.800 5.300V0H1A1 1 0 0 0 0 1v18a1 1 0 0 0 1 1h13a1 1 0 0 0 1-1V6.300H9.800a1 1 0 0 1-1-1zM15 4.800v.200h-5V0h.200a1 1 0 0 1 .700.300l3.800 3.800a1 1 0 0 1 .300.700z"/></svg>
<div style="position:absolute;left:1386.2px;top:346px;width:22.6px;height:22px;box-sizing:border-box;background:#c8e3cf;border:1px solid #c6c6dc;border-radius:3px;"></div>
<svg style="position:absolute;left:1393.2px;top:351.41px" width="9.2" height="9.2" viewBox="0 0 19 20" preserveAspectRatio="none"><path fill="#0d0d12" d="M0 1.600A1.600 1.600 0 0 1 1.600 0H8v4.400A1.600 1.600 0 0 0 9.600 6H14v6H6.600A1.600 1.600 0 0 0 5 13.600V18.500H1.600A1.600 1.600 0 0 1 0 16.900zM14 4.800H9.600a.400.400 0 0 1-.400-.400V0z"/><text x="6" y="20" font-family="Liberation Sans, sans-serif" font-weight="700" font-size="8" textLength="13" lengthAdjust="spacingAndGlyphs" fill="#0d0d12">PDF</text></svg>
<div style="position:absolute;left:1412.1px;top:346px;width:22.7px;height:22px;box-sizing:border-box;background:#e6dfcf;border:1px solid #f0bcb8;border-radius:3px;"></div>
<svg style="position:absolute;left:1418.9px;top:351.41px" width="9.3" height="9.2" viewBox="0 0 20 20" preserveAspectRatio="none"><path fill="none" stroke="#0d0d12" stroke-width="2.400" stroke-linejoin="round" d="M4.400 7V1.200h8.800l2.400 2.400V7"/><rect x="0" y="7" width="20" height="7.600" rx="2.200" fill="#0d0d12"/><rect x="4.400" y="12.200" width="11.200" height="6.600" fill="#e6dfcf" stroke="#0d0d12" stroke-width="2.400" stroke-linejoin="round"/></svg>
<div style="position:absolute;left:1438.2px;top:347.5px;width:19.7px;height:18.5px;box-sizing:border-box;background:#e5dccb;border-radius:3px;"></div>
<svg style="position:absolute;left:1443.7px;top:351.41px" width="9.2" height="9.2" viewBox="0 0 20 20" preserveAspectRatio="none"><circle cx="10" cy="10" r="10" fill="#f03a44"/><path stroke="#fff" stroke-width="2.300" stroke-linecap="round" d="M7 7l6 6M13 7l-6 6"/></svg>
</div>
<div class="tr paid">
<div style="position:absolute;left:122px;top:384.9px;width:9px;height:8.8px;background:#078307;border-radius:1.500px;"></div>
<span class="t " style="left:133.75px;top:384.24px;font-size:10px;line-height:13px;color:#2b2d4f;letter-spacing:0.556px;">Nova Venda</span>
<span class="t " style="left:353.25px;top:384.24px;font-size:10px;line-height:13px;color:#2b2d4f;letter-spacing:-0.02px;">R$ 280,00</span>
<span class="t " style="left:462.00px;top:384.24px;font-size:10px;line-height:13px;color:#2b2d4f;letter-spacing:0.321px;">280,00</span>
<span class="t " style="left:581.50px;top:384.24px;font-size:10px;line-height:13px;color:#2b2d4f;letter-spacing:0.311px;">Sem Registro</span>
<span class="t " style="left:917.00px;top:384.24px;font-size:10px;line-height:13px;color:#f04545;letter-spacing:0.626px;">07/03/2026</span>
<span class="t " style="left:1073.60px;top:384.24px;font-size:10px;line-height:13px;color:#2b2d4f;letter-spacing:0.626px;">07/03/2026</span>
<div style="position:absolute;left:1225.2px;top:380.97px;width:19px;height:18.7px;background:#e3e7e7;"></div>
<svg style="position:absolute;left:1228.4px;top:385.07px" width="12.4" height="9.7" viewBox="0 0 24 19" preserveAspectRatio="none"><path fill="#8a8a8a" d="M2.5 3.5H6L7.6.9A1.8 1.8 0 0 1 9.2 0h5.6a1.8 1.8 0 0 1 1.6.9L18 3.5h3.5A2.5 2.5 0 0 1 24 6v10.5a2.5 2.5 0 0 1-2.5 2.5h-19A2.5 2.5 0 0 1 0 16.500V6a2.500 2.500 0 0 1 2.500-2.500z"/><circle cx="12" cy="10.800" r="5.900" fill="#e3e7e7"/><circle cx="12" cy="10.800" r="3.800" fill="#8a8a8a"/></svg>
<div style="position:absolute;left:1336px;top:379px;width:25px;height:22px;box-sizing:border-box;background:#e9edbe;border:1px solid #f5dc9f;border-radius:3px;"></div>
<svg style="position:absolute;left:1343.0px;top:385.37px" width="10.9" height="8.5" viewBox="0 3 24 18" preserveAspectRatio="none"><g fill="none" stroke="#ffa033" stroke-linecap="round" stroke-linejoin="round"><path stroke-width="1.900" d="M1 12C3.800 6 7.800 4 12 4s8.200 2 11 8c-2.800 6-6.800 8-11 8s-8.200-2-11-8z"/><circle cx="12" cy="12" r="3.900" stroke-width="2.600"/></g></svg>
<div style="position:absolute;left:1363px;top:379px;width:21px;height:22px;box-sizing:border-box;background:#c8e3cf;border:1px solid #c6c6dc;border-radius:3px;"></div>
<svg style="position:absolute;left:1370.2px;top:384.97px" width="7.1" height="9.1" viewBox="0 0 15 20" preserveAspectRatio="none"><path fill="#3b3a5b" d="M8.800 5.300V0H1A1 1 0 0 0 0 1v18a1 1 0 0 0 1 1h13a1 1 0 0 0 1-1V6.300H9.800a1 1 0 0 1-1-1zM15 4.800v.200h-5V0h.200a1 1 0 0 1 .700.300l3.800 3.800a1 1 0 0 1 .300.700z"/></svg>
<div style="position:absolute;left:1386.2px;top:379px;width:22.6px;height:22px;box-sizing:border-box;background:#c8e3cf;border:1px solid #c6c6dc;border-radius:3px;"></div>
<svg style="position:absolute;left:1393.2px;top:384.97px" width="9.2" height="9.2" viewBox="0 0 19 20" preserveAspectRatio="none"><path fill="#0d0d12" d="M0 1.600A1.600 1.600 0 0 1 1.600 0H8v4.400A1.600 1.600 0 0 0 9.600 6H14v6H6.600A1.600 1.600 0 0 0 5 13.600V18.500H1.600A1.600 1.600 0 0 1 0 16.900zM14 4.800H9.600a.400.400 0 0 1-.400-.400V0z"/><text x="6" y="20" font-family="Liberation Sans, sans-serif" font-weight="700" font-size="8" textLength="13" lengthAdjust="spacingAndGlyphs" fill="#0d0d12">PDF</text></svg>
<div style="position:absolute;left:1412.1px;top:379px;width:22.7px;height:22px;box-sizing:border-box;background:#e6dfcf;border:1px solid #f0bcb8;border-radius:3px;"></div>
<svg style="position:absolute;left:1418.9px;top:384.97px" width="9.3" height="9.2" viewBox="0 0 20 20" preserveAspectRatio="none"><path fill="none" stroke="#0d0d12" stroke-width="2.400" stroke-linejoin="round" d="M4.400 7V1.200h8.800l2.400 2.400V7"/><rect x="0" y="7" width="20" height="7.600" rx="2.200" fill="#0d0d12"/><rect x="4.400" y="12.200" width="11.200" height="6.600" fill="#e6dfcf" stroke="#0d0d12" stroke-width="2.400" stroke-linejoin="round"/></svg>
<div style="position:absolute;left:1438.2px;top:380.5px;width:19.7px;height:18.5px;box-sizing:border-box;background:#e5dccb;border-radius:3px;"></div>
<svg style="position:absolute;left:1443.7px;top:384.97px" width="9.2" height="9.2" viewBox="0 0 20 20" preserveAspectRatio="none"><circle cx="10" cy="10" r="10" fill="#f03a44"/><path stroke="#fff" stroke-width="2.300" stroke-linecap="round" d="M7 7l6 6M13 7l-6 6"/></svg>
</div>
<div class="tr paid">
<div style="position:absolute;left:122px;top:418.9px;width:9px;height:8.8px;background:#078307;border-radius:1.500px;"></div>
<span class="t " style="left:133.75px;top:418.24px;font-size:10px;line-height:13px;color:#2b2d4f;letter-spacing:0.556px;">Nova Venda</span>
<span class="t " style="left:353.25px;top:418.24px;font-size:10px;line-height:13px;color:#2b2d4f;letter-spacing:-0.02px;">R$ 385,00</span>
<span class="t " style="left:462.00px;top:418.24px;font-size:10px;line-height:13px;color:#2b2d4f;letter-spacing:0.321px;">385,00</span>
<span class="t " style="left:581.50px;top:418.24px;font-size:10px;line-height:13px;color:#2b2d4f;letter-spacing:0.311px;">Sem Registro</span>
<span class="t " style="left:917.00px;top:418.24px;font-size:10px;line-height:13px;color:#f04545;letter-spacing:0.626px;">07/03/2026</span>
<span class="t " style="left:1073.60px;top:418.24px;font-size:10px;line-height:13px;color:#2b2d4f;letter-spacing:0.626px;">07/03/2026</span>
<div style="position:absolute;left:1225.2px;top:414.53px;width:19px;height:18.7px;background:#e3e7e7;"></div>
<svg style="position:absolute;left:1228.4px;top:418.63px" width="12.4" height="9.7" viewBox="0 0 24 19" preserveAspectRatio="none"><path fill="#8a8a8a" d="M2.5 3.5H6L7.6.9A1.8 1.8 0 0 1 9.2 0h5.6a1.8 1.8 0 0 1 1.6.9L18 3.5h3.5A2.5 2.5 0 0 1 24 6v10.5a2.5 2.5 0 0 1-2.5 2.5h-19A2.5 2.5 0 0 1 0 16.500V6a2.500 2.500 0 0 1 2.500-2.500z"/><circle cx="12" cy="10.800" r="5.900" fill="#e3e7e7"/><circle cx="12" cy="10.800" r="3.800" fill="#8a8a8a"/></svg>
<div style="position:absolute;left:1336px;top:413px;width:25px;height:22px;box-sizing:border-box;background:#e9edbe;border:1px solid #f5dc9f;border-radius:3px;"></div>
<svg style="position:absolute;left:1343.0px;top:418.92999999999995px" width="10.9" height="8.5" viewBox="0 3 24 18" preserveAspectRatio="none"><g fill="none" stroke="#ffa033" stroke-linecap="round" stroke-linejoin="round"><path stroke-width="1.900" d="M1 12C3.800 6 7.800 4 12 4s8.200 2 11 8c-2.800 6-6.800 8-11 8s-8.200-2-11-8z"/><circle cx="12" cy="12" r="3.900" stroke-width="2.600"/></g></svg>
<div style="position:absolute;left:1363px;top:413px;width:21px;height:22px;box-sizing:border-box;background:#c8e3cf;border:1px solid #c6c6dc;border-radius:3px;"></div>
<svg style="position:absolute;left:1370.2px;top:418.53px" width="7.1" height="9.1" viewBox="0 0 15 20" preserveAspectRatio="none"><path fill="#3b3a5b" d="M8.800 5.300V0H1A1 1 0 0 0 0 1v18a1 1 0 0 0 1 1h13a1 1 0 0 0 1-1V6.300H9.800a1 1 0 0 1-1-1zM15 4.800v.200h-5V0h.200a1 1 0 0 1 .700.300l3.800 3.800a1 1 0 0 1 .300.700z"/></svg>
<div style="position:absolute;left:1386.2px;top:413px;width:22.6px;height:22px;box-sizing:border-box;background:#c8e3cf;border:1px solid #c6c6dc;border-radius:3px;"></div>
<svg style="position:absolute;left:1393.2px;top:418.53px" width="9.2" height="9.2" viewBox="0 0 19 20" preserveAspectRatio="none"><path fill="#0d0d12" d="M0 1.600A1.600 1.600 0 0 1 1.600 0H8v4.400A1.600 1.600 0 0 0 9.600 6H14v6H6.600A1.600 1.600 0 0 0 5 13.600V18.500H1.600A1.600 1.600 0 0 1 0 16.900zM14 4.800H9.600a.400.400 0 0 1-.400-.400V0z"/><text x="6" y="20" font-family="Liberation Sans, sans-serif" font-weight="700" font-size="8" textLength="13" lengthAdjust="spacingAndGlyphs" fill="#0d0d12">PDF</text></svg>
<div style="position:absolute;left:1412.1px;top:413px;width:22.7px;height:22px;box-sizing:border-box;background:#e6dfcf;border:1px solid #f0bcb8;border-radius:3px;"></div>
<svg style="position:absolute;left:1418.9px;top:418.53px" width="9.3" height="9.2" viewBox="0 0 20 20" preserveAspectRatio="none"><path fill="none" stroke="#0d0d12" stroke-width="2.400" stroke-linejoin="round" d="M4.400 7V1.200h8.800l2.400 2.400V7"/><rect x="0" y="7" width="20" height="7.600" rx="2.200" fill="#0d0d12"/><rect x="4.400" y="12.200" width="11.200" height="6.600" fill="#e6dfcf" stroke="#0d0d12" stroke-width="2.400" stroke-linejoin="round"/></svg>
<div style="position:absolute;left:1438.2px;top:414.5px;width:19.7px;height:18.5px;box-sizing:border-box;background:#e5dccb;border-radius:3px;"></div>
<svg style="position:absolute;left:1443.7px;top:418.53px" width="9.2" height="9.2" viewBox="0 0 20 20" preserveAspectRatio="none"><circle cx="10" cy="10" r="10" fill="#f03a44"/><path stroke="#fff" stroke-width="2.300" stroke-linecap="round" d="M7 7l6 6M13 7l-6 6"/></svg>
</div>
<div class="tr paid">
<div style="position:absolute;left:122px;top:451.9px;width:9px;height:8.8px;background:#078307;border-radius:1.500px;"></div>
<span class="t " style="left:133.75px;top:451.24px;font-size:10px;line-height:13px;color:#2b2d4f;letter-spacing:0.556px;">Nova Venda</span>
<span class="t " style="left:353.25px;top:451.24px;font-size:10px;line-height:13px;color:#2b2d4f;letter-spacing:-0.18px;transform:scaleX(0.9571);">R$ 120,00</span>
<span class="t " style="left:462.00px;top:451.24px;font-size:10px;line-height:13px;color:#2b2d4f;letter-spacing:-0.18px;transform:scaleX(0.9766);">120,00</span>
<span class="t " style="left:581.50px;top:451.24px;font-size:10px;line-height:13px;color:#2b2d4f;letter-spacing:0.311px;">Sem Registro</span>
<span class="t " style="left:917.00px;top:451.24px;font-size:10px;line-height:13px;color:#f04545;letter-spacing:0.626px;">07/03/2026</span>
<span class="t " style="left:1073.60px;top:451.24px;font-size:10px;line-height:13px;color:#2b2d4f;letter-spacing:0.626px;">07/03/2026</span>
<div style="position:absolute;left:1225.2px;top:448.1px;width:19px;height:18.7px;background:#e3e7e7;"></div>
<svg style="position:absolute;left:1228.4px;top:452.2px" width="12.4" height="9.7" viewBox="0 0 24 19" preserveAspectRatio="none"><path fill="#8a8a8a" d="M2.5 3.5H6L7.6.9A1.8 1.8 0 0 1 9.2 0h5.6a1.8 1.8 0 0 1 1.6.9L18 3.5h3.5A2.5 2.5 0 0 1 24 6v10.5a2.5 2.5 0 0 1-2.5 2.5h-19A2.5 2.5 0 0 1 0 16.500V6a2.500 2.500 0 0 1 2.500-2.500z"/><circle cx="12" cy="10.800" r="5.900" fill="#e3e7e7"/><circle cx="12" cy="10.800" r="3.800" fill="#8a8a8a"/></svg>
<div style="position:absolute;left:1336px;top:447px;width:25px;height:21px;box-sizing:border-box;background:#e9edbe;border:1px solid #f5dc9f;border-radius:3px;"></div>
<svg style="position:absolute;left:1343.0px;top:452.5px" width="10.9" height="8.5" viewBox="0 3 24 18" preserveAspectRatio="none"><g fill="none" stroke="#ffa033" stroke-linecap="round" stroke-linejoin="round"><path stroke-width="1.900" d="M1 12C3.800 6 7.800 4 12 4s8.200 2 11 8c-2.800 6-6.800 8-11 8s-8.200-2-11-8z"/><circle cx="12" cy="12" r="3.900" stroke-width="2.600"/></g></svg>
<div style="position:absolute;left:1363px;top:447px;width:21px;height:21px;box-sizing:border-box;background:#c8e3cf;border:1px solid #c6c6dc;border-radius:3px;"></div>
<svg style="position:absolute;left:1370.2px;top:452.1px" width="7.1" height="9.1" viewBox="0 0 15 20" preserveAspectRatio="none"><path fill="#3b3a5b" d="M8.800 5.300V0H1A1 1 0 0 0 0 1v18a1 1 0 0 0 1 1h13a1 1 0 0 0 1-1V6.300H9.800a1 1 0 0 1-1-1zM15 4.800v.200h-5V0h.200a1 1 0 0 1 .700.300l3.800 3.800a1 1 0 0 1 .300.700z"/></svg>
<div style="position:absolute;left:1386.2px;top:447px;width:22.6px;height:21px;box-sizing:border-box;background:#c8e3cf;border:1px solid #c6c6dc;border-radius:3px;"></div>
<svg style="position:absolute;left:1393.2px;top:452.1px" width="9.2" height="9.2" viewBox="0 0 19 20" preserveAspectRatio="none"><path fill="#0d0d12" d="M0 1.600A1.600 1.600 0 0 1 1.600 0H8v4.400A1.600 1.600 0 0 0 9.600 6H14v6H6.600A1.600 1.600 0 0 0 5 13.600V18.500H1.600A1.600 1.600 0 0 1 0 16.900zM14 4.800H9.600a.400.400 0 0 1-.400-.400V0z"/><text x="6" y="20" font-family="Liberation Sans, sans-serif" font-weight="700" font-size="8" textLength="13" lengthAdjust="spacingAndGlyphs" fill="#0d0d12">PDF</text></svg>
<div style="position:absolute;left:1412.1px;top:447px;width:22.7px;height:21px;box-sizing:border-box;background:#e6dfcf;border:1px solid #f0bcb8;border-radius:3px;"></div>
<svg style="position:absolute;left:1418.9px;top:452.1px" width="9.3" height="9.2" viewBox="0 0 20 20" preserveAspectRatio="none"><path fill="none" stroke="#0d0d12" stroke-width="2.400" stroke-linejoin="round" d="M4.400 7V1.200h8.800l2.400 2.400V7"/><rect x="0" y="7" width="20" height="7.600" rx="2.200" fill="#0d0d12"/><rect x="4.400" y="12.200" width="11.200" height="6.600" fill="#e6dfcf" stroke="#0d0d12" stroke-width="2.400" stroke-linejoin="round"/></svg>
<div style="position:absolute;left:1438.2px;top:448.5px;width:19.7px;height:18.5px;box-sizing:border-box;background:#e5dccb;border-radius:3px;"></div>
<svg style="position:absolute;left:1443.7px;top:452.1px" width="9.2" height="9.2" viewBox="0 0 20 20" preserveAspectRatio="none"><circle cx="10" cy="10" r="10" fill="#f03a44"/><path stroke="#fff" stroke-width="2.300" stroke-linecap="round" d="M7 7l6 6M13 7l-6 6"/></svg>
</div>
<div class="tr paid">
<div style="position:absolute;left:122px;top:485.9px;width:9px;height:8.8px;background:#078307;border-radius:1.500px;"></div>
<span class="t " style="left:133.75px;top:485.24px;font-size:10px;line-height:13px;color:#2b2d4f;letter-spacing:0.556px;">Nova Venda</span>
<span class="t " style="left:353.25px;top:485.24px;font-size:10px;line-height:13px;color:#2b2d4f;letter-spacing:-0.18px;transform:scaleX(0.9773);">R$ 100,00</span>
<span class="t " style="left:462.00px;top:485.24px;font-size:10px;line-height:13px;color:#2b2d4f;letter-spacing:-0.18px;transform:scaleX(0.9935);">100,00</span>
<span class="t " style="left:581.50px;top:485.24px;font-size:10px;line-height:13px;color:#2b2d4f;letter-spacing:0.311px;">Sem Registro</span>
<span class="t " style="left:917.00px;top:485.24px;font-size:10px;line-height:13px;color:#f04545;letter-spacing:0.682px;">06/03/2026</span>
<span class="t " style="left:1073.60px;top:485.24px;font-size:10px;line-height:13px;color:#2b2d4f;letter-spacing:0.715px;">06/03/2026</span>
<div style="position:absolute;left:1225.2px;top:481.66px;width:19px;height:18.7px;background:#e3e7e7;"></div>
<svg style="position:absolute;left:1228.4px;top:485.76px" width="12.4" height="9.7" viewBox="0 0 24 19" preserveAspectRatio="none"><path fill="#8a8a8a" d="M2.5 3.5H6L7.6.9A1.8 1.8 0 0 1 9.2 0h5.6a1.8 1.8 0 0 1 1.6.9L18 3.5h3.5A2.5 2.5 0 0 1 24 6v10.5a2.5 2.5 0 0 1-2.5 2.5h-19A2.5 2.5 0 0 1 0 16.500V6a2.500 2.500 0 0 1 2.500-2.500z"/><circle cx="12" cy="10.800" r="5.900" fill="#e3e7e7"/><circle cx="12" cy="10.800" r="3.800" fill="#8a8a8a"/></svg>
<div style="position:absolute;left:1336px;top:480px;width:25px;height:22px;box-sizing:border-box;background:#e9edbe;border:1px solid #f5dc9f;border-radius:3px;"></div>
<svg style="position:absolute;left:1343.0px;top:486.06px" width="10.9" height="8.5" viewBox="0 3 24 18" preserveAspectRatio="none"><g fill="none" stroke="#ffa033" stroke-linecap="round" stroke-linejoin="round"><path stroke-width="1.900" d="M1 12C3.800 6 7.800 4 12 4s8.200 2 11 8c-2.800 6-6.800 8-11 8s-8.200-2-11-8z"/><circle cx="12" cy="12" r="3.900" stroke-width="2.600"/></g></svg>
<div style="position:absolute;left:1363px;top:480px;width:21px;height:22px;box-sizing:border-box;background:#c8e3cf;border:1px solid #c6c6dc;border-radius:3px;"></div>
<svg style="position:absolute;left:1370.2px;top:485.66px" width="7.1" height="9.1" viewBox="0 0 15 20" preserveAspectRatio="none"><path fill="#3b3a5b" d="M8.800 5.300V0H1A1 1 0 0 0 0 1v18a1 1 0 0 0 1 1h13a1 1 0 0 0 1-1V6.300H9.800a1 1 0 0 1-1-1zM15 4.800v.200h-5V0h.200a1 1 0 0 1 .700.300l3.800 3.800a1 1 0 0 1 .300.700z"/></svg>
<div style="position:absolute;left:1386.2px;top:480px;width:22.6px;height:22px;box-sizing:border-box;background:#c8e3cf;border:1px solid #c6c6dc;border-radius:3px;"></div>
<svg style="position:absolute;left:1393.2px;top:485.66px" width="9.2" height="9.2" viewBox="0 0 19 20" preserveAspectRatio="none"><path fill="#0d0d12" d="M0 1.600A1.600 1.600 0 0 1 1.600 0H8v4.400A1.600 1.600 0 0 0 9.600 6H14v6H6.600A1.600 1.600 0 0 0 5 13.600V18.500H1.600A1.600 1.600 0 0 1 0 16.900zM14 4.800H9.600a.400.400 0 0 1-.400-.400V0z"/><text x="6" y="20" font-family="Liberation Sans, sans-serif" font-weight="700" font-size="8" textLength="13" lengthAdjust="spacingAndGlyphs" fill="#0d0d12">PDF</text></svg>
<div style="position:absolute;left:1412.1px;top:480px;width:22.7px;height:22px;box-sizing:border-box;background:#e6dfcf;border:1px solid #f0bcb8;border-radius:3px;"></div>
<svg style="position:absolute;left:1418.9px;top:485.66px" width="9.3" height="9.2" viewBox="0 0 20 20" preserveAspectRatio="none"><path fill="none" stroke="#0d0d12" stroke-width="2.400" stroke-linejoin="round" d="M4.400 7V1.200h8.800l2.400 2.400V7"/><rect x="0" y="7" width="20" height="7.600" rx="2.200" fill="#0d0d12"/><rect x="4.400" y="12.200" width="11.200" height="6.600" fill="#e6dfcf" stroke="#0d0d12" stroke-width="2.400" stroke-linejoin="round"/></svg>
<div style="position:absolute;left:1438.2px;top:481.5px;width:19.7px;height:18.5px;box-sizing:border-box;background:#e5dccb;border-radius:3px;"></div>
<svg style="position:absolute;left:1443.7px;top:485.66px" width="9.2" height="9.2" viewBox="0 0 20 20" preserveAspectRatio="none"><circle cx="10" cy="10" r="10" fill="#f03a44"/><path stroke="#fff" stroke-width="2.300" stroke-linecap="round" d="M7 7l6 6M13 7l-6 6"/></svg>
</div>
<div class="tr paid">
<div style="position:absolute;left:122px;top:518.9px;width:9px;height:8.8px;background:#078307;border-radius:1.500px;"></div>
<span class="t " style="left:133.75px;top:518.24px;font-size:10px;line-height:13px;color:#2b2d4f;letter-spacing:0.556px;">Nova Venda</span>
<span class="t " style="left:353.25px;top:518.24px;font-size:10px;line-height:13px;color:#2b2d4f;letter-spacing:-0.056px;">R$ 40,00</span>
<span class="t " style="left:462.00px;top:518.24px;font-size:10px;line-height:13px;color:#2b2d4f;letter-spacing:0.342px;">40,00</span>
<span class="t " style="left:581.50px;top:518.24px;font-size:10px;line-height:13px;color:#2b2d4f;letter-spacing:0.311px;">Sem Registro</span>
<span class="t " style="left:917.00px;top:518.24px;font-size:10px;line-height:13px;color:#f04545;letter-spacing:0.682px;">06/03/2026</span>
<span class="t " style="left:1073.60px;top:518.24px;font-size:10px;line-height:13px;color:#2b2d4f;letter-spacing:0.715px;">06/03/2026</span>
<div style="position:absolute;left:1225.2px;top:515.22px;width:19px;height:18.7px;background:#e3e7e7;"></div>
<svg style="position:absolute;left:1228.4px;top:519.32px" width="12.4" height="9.7" viewBox="0 0 24 19" preserveAspectRatio="none"><path fill="#8a8a8a" d="M2.5 3.5H6L7.6.9A1.8 1.8 0 0 1 9.2 0h5.6a1.8 1.8 0 0 1 1.6.9L18 3.5h3.5A2.5 2.5 0 0 1 24 6v10.5a2.5 2.5 0 0 1-2.5 2.5h-19A2.5 2.5 0 0 1 0 16.500V6a2.500 2.500 0 0 1 2.500-2.500z"/><circle cx="12" cy="10.800" r="5.900" fill="#e3e7e7"/><circle cx="12" cy="10.800" r="3.800" fill="#8a8a8a"/></svg>
<div style="position:absolute;left:1336px;top:514px;width:25px;height:21px;box-sizing:border-box;background:#e9edbe;border:1px solid #f5dc9f;border-radius:3px;"></div>
<svg style="position:absolute;left:1343.0px;top:519.62px" width="10.9" height="8.5" viewBox="0 3 24 18" preserveAspectRatio="none"><g fill="none" stroke="#ffa033" stroke-linecap="round" stroke-linejoin="round"><path stroke-width="1.900" d="M1 12C3.800 6 7.800 4 12 4s8.200 2 11 8c-2.800 6-6.800 8-11 8s-8.200-2-11-8z"/><circle cx="12" cy="12" r="3.900" stroke-width="2.600"/></g></svg>
<div style="position:absolute;left:1363px;top:514px;width:21px;height:21px;box-sizing:border-box;background:#c8e3cf;border:1px solid #c6c6dc;border-radius:3px;"></div>
<svg style="position:absolute;left:1370.2px;top:519.22px" width="7.1" height="9.1" viewBox="0 0 15 20" preserveAspectRatio="none"><path fill="#3b3a5b" d="M8.800 5.300V0H1A1 1 0 0 0 0 1v18a1 1 0 0 0 1 1h13a1 1 0 0 0 1-1V6.300H9.800a1 1 0 0 1-1-1zM15 4.800v.200h-5V0h.200a1 1 0 0 1 .700.300l3.800 3.800a1 1 0 0 1 .300.700z"/></svg>
<div style="position:absolute;left:1386.2px;top:514px;width:22.6px;height:21px;box-sizing:border-box;background:#c8e3cf;border:1px solid #c6c6dc;border-radius:3px;"></div>
<svg style="position:absolute;left:1393.2px;top:519.22px" width="9.2" height="9.2" viewBox="0 0 19 20" preserveAspectRatio="none"><path fill="#0d0d12" d="M0 1.600A1.600 1.600 0 0 1 1.600 0H8v4.400A1.600 1.600 0 0 0 9.600 6H14v6H6.600A1.600 1.600 0 0 0 5 13.600V18.500H1.600A1.600 1.600 0 0 1 0 16.900zM14 4.800H9.600a.400.400 0 0 1-.400-.400V0z"/><text x="6" y="20" font-family="Liberation Sans, sans-serif" font-weight="700" font-size="8" textLength="13" lengthAdjust="spacingAndGlyphs" fill="#0d0d12">PDF</text></svg>
<div style="position:absolute;left:1412.1px;top:514px;width:22.7px;height:21px;box-sizing:border-box;background:#e6dfcf;border:1px solid #f0bcb8;border-radius:3px;"></div>
<svg style="position:absolute;left:1418.9px;top:519.22px" width="9.3" height="9.2" viewBox="0 0 20 20" preserveAspectRatio="none"><path fill="none" stroke="#0d0d12" stroke-width="2.400" stroke-linejoin="round" d="M4.400 7V1.200h8.800l2.400 2.400V7"/><rect x="0" y="7" width="20" height="7.600" rx="2.200" fill="#0d0d12"/><rect x="4.400" y="12.200" width="11.200" height="6.600" fill="#e6dfcf" stroke="#0d0d12" stroke-width="2.400" stroke-linejoin="round"/></svg>
<div style="position:absolute;left:1438.2px;top:515.5px;width:19.7px;height:18.5px;box-sizing:border-box;background:#e5dccb;border-radius:3px;"></div>
<svg style="position:absolute;left:1443.7px;top:519.22px" width="9.2" height="9.2" viewBox="0 0 20 20" preserveAspectRatio="none"><circle cx="10" cy="10" r="10" fill="#f03a44"/><path stroke="#fff" stroke-width="2.300" stroke-linecap="round" d="M7 7l6 6M13 7l-6 6"/></svg>
</div>
<div class="tr">
<div style="position:absolute;left:65.2px;top:553.38px;width:11.6px;height:11.5px;box-sizing:border-box;background:#fff;border:1px solid #c5cee2;border-radius:2.500px;"></div>
<div style="position:absolute;left:122px;top:552.9px;width:9px;height:8.8px;background:#f04141;border-radius:1.500px;"></div>
<span class="t " style="left:133.75px;top:552.24px;font-size:10px;line-height:13px;color:#2b2d4f;letter-spacing:0.556px;">Nova Venda</span>
<span class="t " style="left:353.25px;top:552.24px;font-size:10px;line-height:13px;color:#2b2d4f;letter-spacing:-0.18px;transform:scaleX(0.9773);">R$ 160,00</span>
<span class="t " style="left:462.00px;top:552.24px;font-size:10px;line-height:13px;color:#2b2d4f;letter-spacing:-0.18px;transform:scaleX(0.9935);">160,00</span>
<span class="t " style="left:581.50px;top:552.24px;font-size:10px;line-height:13px;color:#2b2d4f;letter-spacing:0.295px;">Rafael Pereira dos Santos Neto</span>
<span class="t " style="left:917.00px;top:552.24px;font-size:10px;line-height:13px;color:#2b2d4f;letter-spacing:0.338px;">13/03/2026</span>
<span class="t " style="left:1073.60px;top:552.24px;font-size:10px;line-height:13px;color:#2b2d4f;letter-spacing:0.871px;">00/00/0000</span>
<div style="position:absolute;left:1225.2px;top:548.78px;width:19px;height:18.7px;background:#e4e7e8;"></div>
<svg style="position:absolute;left:1228.4px;top:552.88px" width="12.4" height="9.7" viewBox="0 0 24 19" preserveAspectRatio="none"><path fill="#8a8a8a" d="M2.5 3.5H6L7.6.9A1.8 1.8 0 0 1 9.2 0h5.6a1.8 1.8 0 0 1 1.6.9L18 3.5h3.5A2.5 2.5 0 0 1 24 6v10.5a2.5 2.5 0 0 1-2.5 2.5h-19A2.5 2.5 0 0 1 0 16.500V6a2.500 2.500 0 0 1 2.500-2.500z"/><circle cx="12" cy="10.800" r="5.900" fill="#e4e7e8"/><circle cx="12" cy="10.800" r="3.800" fill="#8a8a8a"/></svg>
<div style="position:absolute;left:1336px;top:547px;width:23px;height:22px;box-sizing:border-box;background:#d1f1f3;border:1px solid #a9e4e8;border-radius:3px;"></div>
<svg style="position:absolute;left:1343.4px;top:552.78px" width="9.6" height="9.6" viewBox="0 0 20 20" preserveAspectRatio="none"><path fill="none" stroke="#4fb8ee" stroke-width="2.2" stroke-linecap="round" stroke-linejoin="round" d="M9 3.600H4.200A2.200 2.200 0 0 0 2 5.800v10A2.200 2.200 0 0 0 4.200 18h10a2.200 2.200 0 0 0 2.200-2.200V11"/><path fill="#4fb8ee" d="M15.200.900a1.500 1.500 0 0 1 2.100 0l1.800 1.800a1.500 1.500 0 0 1 0 2.100L11 12.900l-4.300 1 .900-4.300z"/></svg>
<div style="position:absolute;left:1362px;top:547px;width:22px;height:22px;box-sizing:border-box;background:#fddcdd;border:1px solid #f9b5b8;border-radius:3px;"></div>
<svg style="position:absolute;left:1369px;top:552.78px" width="8.2" height="9.2" viewBox="0 0 18 20" preserveAspectRatio="none"><path fill="#f0353f" d="M6.300.700A1.300 1.300 0 0 1 7.500 0h3a1.300 1.300 0 0 1 1.200.700l.500.900H16.500a1.200 1.200 0 0 1 0 2.500h-15a1.200 1.200 0 0 1 0-2.500H5.800zM1.800 5.600h14.400l-.800 12.500A2 2 0 0 1 13.400 20H4.600a2 2 0 0 1-2-1.900z"/><path stroke="#f9a9a0" stroke-width="1.700" d="M6.500 8v9.400M11.500 8v9.400"/></svg>
<div style="position:absolute;left:1386px;top:547px;width:24px;height:22px;box-sizing:border-box;background:#fff0dd;border:1px solid #ffdcb4;border-radius:3px;"></div>
<svg style="position:absolute;left:1392.9px;top:553.18px" width="10.9" height="8.5" viewBox="0 3 24 18" preserveAspectRatio="none"><g fill="none" stroke="#ffa033" stroke-linecap="round" stroke-linejoin="round"><path stroke-width="1.900" d="M1 12C3.800 6 7.800 4 12 4s8.200 2 11 8c-2.800 6-6.800 8-11 8s-8.200-2-11-8z"/><circle cx="12" cy="12" r="3.900" stroke-width="2.600"/></g></svg>
<div style="position:absolute;left:1413px;top:547px;width:22px;height:22px;box-sizing:border-box;background:#d2ece6;border:1px solid #a9dccf;border-radius:3px;"></div>
<svg style="position:absolute;left:1420px;top:553.88px" width="8.3" height="8.3" viewBox="0 0 20 20" preserveAspectRatio="none"><rect width="20" height="20" rx="3.200" fill="#1a9c86"/><path fill="none" stroke="#d6f3ee" stroke-width="2.600" stroke-linecap="round" stroke-linejoin="round" d="M5.500 10.600 8.600 13.600 14.600 7"/></svg>
<div style="position:absolute;left:1438px;top:547px;width:21px;height:22px;box-sizing:border-box;background:#e4e3ea;border:1px solid #c8c4de;border-radius:3px;"></div>
<svg style="position:absolute;left:1444.9px;top:552.78px" width="8.2" height="9.2" viewBox="0 0 18 20" preserveAspectRatio="none"><path fill="#3b3a5b" d="M0 7.500h18V18a2 2 0 0 1-2 2H2a2 2 0 0 1-2-2zM2 2.500h2.200V.800a.800.800 0 0 1 .800-.800h1.200a.800.800 0 0 1 .800.800V2.500h4V.800a.800.800 0 0 1 .800-.800H13a.800.800 0 0 1 .800.800V2.500H16a2 2 0 0 1 2 2V6H0V4.500a2 2 0 0 1 2-2z"/></svg>
<div style="position:absolute;left:1462px;top:547px;width:21px;height:22px;box-sizing:border-box;background:#e4e3ea;border:1px solid #c8c4de;border-radius:3px;"></div>
<svg style="position:absolute;left:1468.9px;top:552.78px" width="7.1" height="9.1" viewBox="0 0 15 20" preserveAspectRatio="none"><path fill="#3b3a5b" d="M8.800 5.300V0H1A1 1 0 0 0 0 1v18a1 1 0 0 0 1 1h13a1 1 0 0 0 1-1V6.300H9.800a1 1 0 0 1-1-1zM15 4.800v.200h-5V0h.200a1 1 0 0 1 .700.300l3.800 3.800a1 1 0 0 1 .300.700z"/></svg>
<div style="position:absolute;left:1485px;top:549px;width:21px;height:18px;box-sizing:border-box;background:#d2ece6;border-radius:3px;"></div>
<svg style="position:absolute;left:1491px;top:552.78px" width="10" height="9.3" viewBox="0 0 24 24" preserveAspectRatio="none"><path fill="none" stroke="#1a9c86" stroke-width="2" stroke-linejoin="round" d="M12.200 2.200a9.700 9.700 0 0 0-8.300 14.700L2.400 21.700l4.900-1.400A9.700 9.700 0 1 0 12.200 2.200z"/><path fill="#1a9c86" d="M8.600 6.800c.400-.300.900-.200 1.100.200l.900 2c.100.300.100.600-.100.800l-.700.900c.800 1.500 1.900 2.600 3.500 3.400l.900-.800c.200-.200.600-.300.900-.100l1.900 1c.400.200.500.600.300 1-.500 1.200-1.700 1.900-3 1.600-3.900-.900-6.800-3.900-7.500-7.600-.200-1 .600-1.900 1.800-2.400z"/></svg>
</div>
<div style="position:absolute;left:32px;top:239px;width:1px;height:336px;background:#ebedf5;"></div>
<div style="position:absolute;left:116px;top:239px;width:1px;height:336px;background:#ebedf5;"></div>
<div style="position:absolute;left:346px;top:239px;width:1px;height:336px;background:#ebedf5;"></div>
<div style="position:absolute;left:456px;top:239px;width:1px;height:336px;background:#ebedf5;"></div>
<div style="position:absolute;left:575px;top:239px;width:1px;height:336px;background:#ebedf5;"></div>
<div style="position:absolute;left:910px;top:239px;width:1px;height:336px;background:#ebedf5;"></div>
<div style="position:absolute;left:1067px;top:239px;width:1px;height:336px;background:#ebedf5;"></div>
<div style="position:absolute;left:1219px;top:239px;width:1px;height:336px;background:#ebedf5;"></div>
<div style="position:absolute;left:1330px;top:239px;width:1px;height:336px;background:#ebedf5;"></div>
<div style="position:absolute;left:1708px;top:239px;width:1px;height:336px;background:#ebedf5;"></div>
</div>
</div>
<footer class="table-footer">
<span class="t " style="left:32.20px;top:603.57px;font-size:7.6px;line-height:10px;color:#3a3c5c;letter-spacing:0.414px;">Mostrando 1 de 10 (43 registros)</span>
<nav class="pagination">
<div style="position:absolute;left:1456.2px;top:602.4px;width:48.6px;height:27.2px;box-sizing:border-box;background:#fff;border:1px solid #e6e8f3;border-radius:3px;"></div>
<span class="t " style="left:1463.80px;top:609.25px;font-size:8.5px;line-height:12px;color:#c7c9d6;letter-spacing:0.519px;">Anterior</span>
<div style="position:absolute;left:1509.9px;top:603px;width:25.2px;height:26px;box-sizing:border-box;background:#5bb4d1;border:1px solid #5bb4d1;border-radius:3px;"></div>
<span class="t " style="left:1520.13px;top:609.25px;font-size:8.5px;line-height:12px;color:#fff;font-weight:700;">1</span>
<div style="position:absolute;left:1539.2px;top:602.4px;width:26.6px;height:27.2px;box-sizing:border-box;background:#f9f9fc;border:1px solid #ebedf5;border-radius:3px;"></div>
<span class="t " style="left:1550.13px;top:609.25px;font-size:8.5px;line-height:12px;color:#2b2d4f;">2</span>
<div style="position:absolute;left:1568.3px;top:602.4px;width:26.6px;height:27.2px;box-sizing:border-box;background:#f9f9fc;border:1px solid #ebedf5;border-radius:3px;"></div>
<span class="t " style="left:1579.23px;top:609.25px;font-size:8.5px;line-height:12px;color:#2b2d4f;">3</span>
<div style="position:absolute;left:1597.3px;top:602.4px;width:26.6px;height:27.2px;box-sizing:border-box;background:#f9f9fc;border:1px solid #ebedf5;border-radius:3px;"></div>
<span class="t " style="left:1608.23px;top:609.25px;font-size:8.5px;line-height:12px;color:#2b2d4f;">4</span>
<div style="position:absolute;left:1626.2px;top:602.4px;width:26.6px;height:27.2px;box-sizing:border-box;background:#f9f9fc;border:1px solid #ebedf5;border-radius:3px;"></div>
<span class="t " style="left:1637.13px;top:609.25px;font-size:8.5px;line-height:12px;color:#2b2d4f;">5</span>
<div style="position:absolute;left:1658.2px;top:602.4px;width:47.6px;height:27.2px;box-sizing:border-box;background:#f9f9fc;border:1px solid #ebedf5;border-radius:3px;"></div>
<span class="t " style="left:1666.00px;top:609.25px;font-size:8.5px;line-height:12px;color:#2b2d4f;letter-spacing:0.135px;">Próximo</span>
</nav>
</footer>
</main>
</body>
</html>
